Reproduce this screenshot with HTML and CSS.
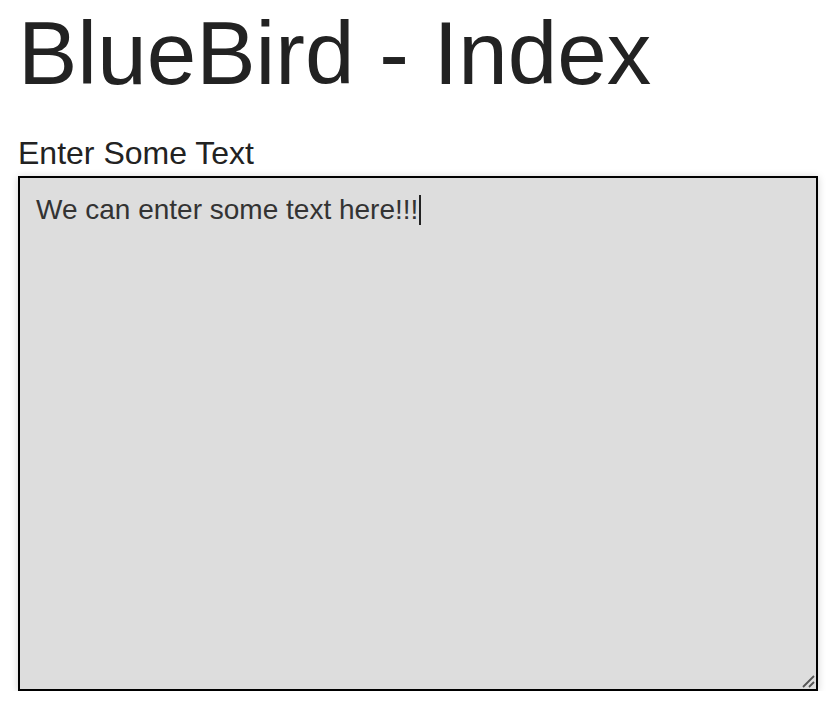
FILE: index.html
```html
<!DOCTYPE html>
<html>
<head>
<meta charset="utf-8">
<link rel="stylesheet" href="styles.css">
</head>
<body>
<div class="page">
  <h1 class="title">BlueBird - Index</h1>
  <label class="label" for="txt">Enter Some Text</label>
  <div class="box">
    <div class="entry">We can enter some text here!!!<span class="caret"></span></div>
    <svg class="grip" width="14" height="14" viewBox="0 0 14 14"><path d="M2 13 L13 2 M8 13 L13 8" stroke="#555" stroke-width="1.8" fill="none"/></svg>
  </div>
</div>
</body>
</html>
```
FILE: styles.css
```css
html, body { margin: 0; padding: 0; background: #fff; }
body { font-family: "Liberation Sans", Arial, sans-serif; color: #222; }
.page { padding: 0 18px; display: flex; flex-direction: column; }
.title { font-size: 89px; font-weight: normal; margin: 3px 0 0 0; line-height: 100px; }
.label { font-size: 32px; line-height: 36px; margin-top: 32px; color: #222; }
.box { position: relative; height: 511px; border: 2px solid #000; background: #ddd; box-shadow: 0 1px 8px rgba(0,0,0,0.18); margin-top: 5px; }
.entry { font-size: 28px; color: #333; padding: 16px 16px; line-height: 32px; }
.caret { display: inline-block; width: 2px; height: 30px; background: #222; vertical-align: -6px; margin-left: 1px; }
.grip { position: absolute; right: 1px; bottom: 1px; }
```
